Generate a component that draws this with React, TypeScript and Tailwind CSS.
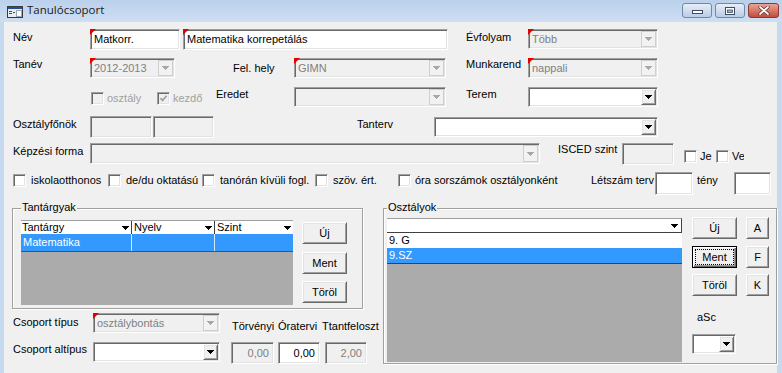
import React from "react";

const SUNKEN =
  "border border-t-[#a0a0a0] border-l-[#a0a0a0] border-r-white border-b-white shadow-[inset_1px_1px_0_#696969,inset_-1px_-1px_0_#e3e3e3]";
const RAISED =
  "border border-t-white border-l-white border-r-[#696969] border-b-[#696969] shadow-[inset_1px_1px_0_#e3e3e3,inset_-1px_-1px_0_#a0a0a0] bg-[#f0f0f0]";
const ETCHED = "border border-[#a0a0a0] shadow-[inset_1px_1px_0_#fff,1px_1px_0_#fff]";

function Arrow({ color = "#000" }: { color?: string }) {
  return (
    <svg width="7" height="4" viewBox="0 0 7 4" shapeRendering="crispEdges" fill={color}>
      <rect x="0" y="0" width="7" height="1" />
      <rect x="1" y="1" width="5" height="1" />
      <rect x="2" y="2" width="3" height="1" />
      <rect x="3" y="3" width="1" height="1" />
    </svg>
  );
}

function Req() {
  return (
    <span className="absolute -left-px -top-px w-0 h-0 border-t-[6px] border-r-[6px] border-t-[#e00000] border-r-transparent" />
  );
}

function Input({
  className = "",
  text = "",
  disabled = false,
  req = false,
  right = false,
}: {
  className?: string;
  text?: string;
  disabled?: boolean;
  req?: boolean;
  right?: boolean;
}) {
  return (
    <div
      className={`relative shrink-0 flex items-center ${SUNKEN} ${
        disabled ? "bg-[#f0f0f0] text-[#808080]" : "bg-white text-black"
      } ${right ? "justify-end pr-[4px]" : "pl-[3px]"} ${className}`}
    >
      <span className="whitespace-nowrap">{text}</span>
      {req && <Req />}
    </div>
  );
}

function Combo({
  className = "",
  text = "",
  disabled = false,
  req = false,
}: {
  className?: string;
  text?: string;
  disabled?: boolean;
  req?: boolean;
}) {
  return (
    <div
      className={`relative shrink-0 flex p-[1px] ${SUNKEN} ${
        disabled ? "bg-[#f0f0f0] text-[#808080]" : "bg-white text-black"
      } ${className}`}
    >
      <span className="flex-1 flex items-center pl-[2px] whitespace-nowrap overflow-hidden">{text}</span>
      <span
        className={`w-[15px] shrink-0 flex items-center justify-center ${
          disabled ? "border border-[#cfcfcf] bg-[#f2f2f2]" : RAISED
        }`}
      >
        <Arrow color={disabled ? "#a8a8a8" : "#000"} />
      </span>
      {req && <Req />}
    </div>
  );
}

function Check({
  label,
  checked = false,
  disabled = false,
  className = "",
  gap = "ml-[5px]",
}: {
  label: string;
  checked?: boolean;
  disabled?: boolean;
  className?: string;
  gap?: string;
}) {
  return (
    <div className={`flex items-center shrink-0 h-[13px] ${className}`}>
      <span
        className={`w-[13px] h-[13px] shrink-0 flex items-center justify-center ${SUNKEN} ${
          disabled ? "bg-[#f0f0f0]" : "bg-white"
        }`}
      >
        {checked && (
          <svg width="9" height="9" viewBox="0 0 9 9">
            <path d="M1.5 4.2 L3.6 6.4 L7.6 1.8" fill="none" stroke={disabled ? "#a0a0a0" : "#000"} strokeWidth="1.7" />
          </svg>
        )}
      </span>
      <span className={`${gap} whitespace-nowrap ${disabled ? "text-[#a0a0a0]" : ""}`}>{label}</span>
    </div>
  );
}

function Btn({ children, className = "" }: { children: React.ReactNode; className?: string }) {
  return <div className={`shrink-0 flex items-center justify-center ${RAISED} ${className}`}>{children}</div>;
}

function AppIcon() {
  return (
    <svg width="16" height="12" viewBox="0 0 16 12" shapeRendering="crispEdges">
      <rect x="0.5" y="0.5" width="15" height="11" fill="#e9edf2" stroke="#3a3a3a" />
      <rect x="1" y="1" width="14" height="2" fill="#1f4f9e" />
      <rect x="2" y="5" width="3" height="1" fill="#4a4a4a" />
      <rect x="2" y="7" width="3" height="1" fill="#4a4a4a" />
      <rect x="6" y="6" width="2" height="1" fill="#4a4a4a" />
      <rect x="9" y="4" width="5" height="6" fill="#ffffff" stroke="#9aa6b5" />
    </svg>
  );
}

function TitleBar() {
  return (
    <div className="h-[22px] flex bg-gradient-to-b from-[#bad0eb] to-[#cfdff2]">
      <div className="ml-[7px] mt-[6px]">
        <AppIcon />
      </div>
      <div className="ml-[4px] mt-[2px] font-['Open_Sans',sans-serif] text-[11.5px] leading-[16px] text-[#1a1a1a]">
        Tanulócsoport
      </div>
      <div className="ml-auto mr-[3px] mt-[3px] flex gap-[3px]">
        <div className="w-[30px] h-[15px] rounded-[3px] border border-[#6f87ab] bg-gradient-to-b from-[#e6eef8] to-[#b9cde7] flex items-end justify-center">
          <svg width="11" height="5" viewBox="0 0 11 5" className="mb-[2px]">
            <rect x="0.5" y="0.5" width="10" height="3" fill="#fff" stroke="#3f4c60" />
          </svg>
        </div>
        <div className="w-[30px] h-[15px] rounded-[3px] border border-[#6f87ab] bg-gradient-to-b from-[#e6eef8] to-[#b9cde7] flex items-center justify-center">
          <svg width="10" height="8" viewBox="0 0 10 8">
            <rect x="0.5" y="0.5" width="9" height="7" fill="#fff" stroke="#3f4c60" />
            <rect x="2.5" y="3" width="5" height="2.5" fill="#9db3d3" stroke="#3f4c60" strokeWidth="0.8" />
          </svg>
        </div>
        <div className="w-[31px] h-[15px] rounded-[3px] border border-[#8a3a32] bg-gradient-to-b from-[#e8a596] to-[#c2493b] flex items-center justify-center">
          <svg width="12" height="9" viewBox="0 0 12 9">
            <path d="M2 1 L10 8 M10 1 L2 8" stroke="#5a2a24" strokeWidth="3.2" strokeLinecap="round" />
            <path d="M2 1 L10 8 M10 1 L2 8" stroke="#ffffff" strokeWidth="1.8" strokeLinecap="round" />
          </svg>
        </div>
      </div>
    </div>
  );
}

function FocusBtn({ children }: { children: React.ReactNode }) {
  return (
    <div className="w-[45px] h-[22px] shrink-0 border border-black bg-[#f0f0f0] shadow-[inset_1px_1px_0_#fff,inset_-1px_-1px_0_#696969,inset_-2px_-2px_0_#a0a0a0] flex p-[2px]">
      <span className="flex-1 border border-dotted border-black flex items-center justify-center">{children}</span>
    </div>
  );
}

export default function App() {
  return (
    <div className="w-[782px] h-[373px] overflow-hidden bg-[#c6d9ef] font-['Liberation_Sans',Arial,sans-serif] text-[11px] leading-[13px] text-black">
      <TitleBar />
      <div className="flex h-[351px]">
        <div className="w-[4px] shrink-0" />
        <div className="w-[773px] shrink-0 bg-[#f0f0f0] flex flex-col">
          {/* Row 1 */}
          <div className="flex items-start mt-[7px] h-[21px]">
            <div className="ml-[9px] w-[77px] pt-[2px] shrink-0">Név</div>
            <Input className="w-[90px] h-[21px]" text="Matkorr." req />
            <Input className="ml-[3px] w-[265px] h-[21px]" text="Matematika korrepetálás" req />
            <div className="ml-[18px] w-[62px] pt-[2px] shrink-0">Évfolyam</div>
            <Combo className="w-[130px] h-[20px]" text="Több" disabled req />
          </div>

          {/* Row 2 */}
          <div className="flex items-start mt-[8px] h-[20px]">
            <div className="ml-[9px] w-[77px] shrink-0">Tanév</div>
            <Combo className="w-[85px] h-[20px]" text="2012-2013" disabled req />
            <div className="ml-[58px] w-[61px] pt-[4px] shrink-0">Fel. hely</div>
            <Combo className="w-[152px] h-[20px]" text="GIMN" disabled req />
            <div className="ml-[20px] w-[62px] shrink-0">Munkarend</div>
            <Combo className="w-[130px] h-[20px]" text="nappali" disabled req />
          </div>

          {/* Row 3 */}
          <div className="flex items-start mt-[9px] h-[20px]">
            <Check className="ml-[87px] w-[66px] mt-[5px]" label="osztály" disabled gap="ml-[3px]" />
            <Check className="w-[59px] mt-[5px]" label="kezdő" checked disabled gap="ml-[3px]" />
            <div className="w-[78px] pt-[1px] shrink-0">Eredet</div>
            <Combo className="w-[152px] h-[20px]" disabled />
            <div className="ml-[20px] w-[62px] pt-[1px] shrink-0">Terem</div>
            <Combo className="w-[130px] h-[20px]" />
          </div>

          {/* Row 4 */}
          <div className="flex items-start mt-[9px] h-[22px]">
            <div className="ml-[9px] w-[77px] pt-[2px] shrink-0">Osztályfőnök</div>
            <Input className="w-[62px] h-[22px]" disabled />
            <Input className="ml-[1px] w-[61px] h-[22px]" disabled />
            <div className="ml-[143px] w-[77px] pt-[2px] shrink-0">Tanterv</div>
            <Combo className="mt-[1px] w-[224px] h-[20px]" />
          </div>

          {/* Row 5 */}
          <div className="flex items-start mt-[5px] h-[22px]">
            <div className="ml-[9px] w-[77px] pt-[2px] shrink-0">Képzési forma</div>
            <Combo className="w-[450px] h-[21px]" disabled />
            <div className="ml-[18px] w-[64px] shrink-0 whitespace-nowrap overflow-hidden">ISCED szint</div>
            <Input className="w-[52px] h-[22px]" disabled />
            <Check className="ml-[10px] w-[32px] mt-[7px]" label="Je" gap="ml-[3px]" />
            <Check className="w-[28px] mt-[7px] overflow-hidden" label="Ve" gap="ml-[3px]" />
          </div>

          {/* Row 6 */}
          <div className="flex items-start mt-[7px] h-[23px]">
            <Check className="ml-[9px] w-[95px] mt-[2px]" label="iskolaotthonos" />
            <Check className="w-[94px] mt-[2px]" label="de/du oktatású" />
            <Check className="w-[113px] mt-[2px]" label="tanórán kívüli fogl." />
            <Check className="w-[83px] mt-[2px]" label="szöv. ért." />
            <Check className="w-[193px] mt-[2px]" label="óra sorszámok osztályonként" gap="ml-[4px]" />
            <div className="w-[64px] pt-[2px] shrink-0 whitespace-nowrap">Létszám terv</div>
            <Input className="w-[38px] h-[23px]" />
            <div className="ml-[4px] w-[37px] pt-[2px] shrink-0">tény</div>
            <Input className="w-[37px] h-[23px]" />
          </div>

          {/* Row 7: groups */}
          <div className="flex items-start mt-[13px]">
            <div className="ml-[8px] w-[371px] shrink-0 flex flex-col">
              <div className={`relative w-[351px] h-[101px] ${ETCHED} flex items-start`}>
                <span className="absolute -top-[8px] left-[8px] px-[1px] bg-[#f0f0f0]">Tantárgyak</span>
                <div className="ml-[8px] mt-[11px] w-[272px] h-[85px] bg-[#ababab] flex flex-col">
                  <div className="h-[14px] flex bg-white border-t border-[#a0a0a0]">
                    <div className="w-[111px] flex items-center justify-between pl-[1px] pr-[2px] border-r border-[#404040]">
                      <span>Tantárgy</span>
                      <Arrow />
                    </div>
                    <div className="w-[83px] flex items-center justify-between pl-[2px] pr-[2px] border-r border-[#404040]">
                      <span>Nyelv</span>
                      <Arrow />
                    </div>
                    <div className="flex-1 flex items-center justify-between pl-[2px] pr-[2px]">
                      <span>Szint</span>
                      <Arrow />
                    </div>
                  </div>
                  <div className="h-[18px] flex bg-[#3399ff] text-white border-b border-[#505050]">
                    <div className="w-[111px] flex items-center pl-[2px] border-r border-[#d8e8f8]">Matematika</div>
                    <div className="w-[83px] border-r border-[#d8e8f8]" />
                    <div className="flex-1" />
                  </div>
                </div>
                <div className="ml-[9px] mt-[13px] flex flex-col">
                  <Btn className="w-[45px] h-[22px]">Új</Btn>
                  <Btn className="mt-[8px] w-[45px] h-[22px]">Ment</Btn>
                  <Btn className="mt-[7px] w-[45px] h-[22px]">Töröl</Btn>
                </div>
              </div>

              <div className="flex items-start mt-[4px] h-[20px]">
                <div className="ml-[1px] w-[80px] pt-[3px] shrink-0">Csoport típus</div>
                <Combo className="w-[127px] h-[20px]" text="osztálybontás" disabled req />
                <div className="ml-[12px] w-[46px] pt-[7px] shrink-0">Törvényi</div>
                <div className="w-[44px] pt-[7px] shrink-0">Óratervi</div>
                <div className="pt-[7px] shrink-0 whitespace-nowrap">Ttantfeloszt</div>
              </div>

              <div className="flex items-start mt-[9px] h-[22px]">
                <div className="ml-[1px] w-[80px] pt-[1px] shrink-0">Csoport altípus</div>
                <Combo className="w-[127px] h-[20px]" />
                <Input className="ml-[11px] w-[43px] h-[22px]" text="0,00" disabled right />
                <Input className="ml-[4px] w-[42px] h-[22px]" text="0,00" right />
                <Input className="ml-[5px] w-[42px] h-[22px]" text="2,00" disabled right />
              </div>
            </div>

            <div className={`relative w-[394px] h-[156px] shrink-0 ${ETCHED} flex items-start`}>
              <span className="absolute -top-[8px] left-[3px] px-[1px] bg-[#f0f0f0]">Osztályok</span>
              <div className="ml-[3px] mt-[9px] w-[295px] h-[144px] flex flex-col">
                <div className="h-[15px] bg-white border-t border-t-[#a0a0a0] border-b border-b-[#404040] border-r border-r-[#404040] flex items-center justify-end pr-[3px]">
                  <Arrow />
                </div>
                <div className="flex-1 bg-[#ababab] flex flex-col">
                  <div className="h-[15px] bg-white pl-[2px] flex items-center">9. G</div>
                  <div className="h-[16px] bg-[#3399ff] text-white pl-[2px] flex items-center border-b border-[#404040]">
                    9.SZ
                  </div>
                </div>
              </div>
              <div className="ml-[10px] mt-[8px] flex flex-col">
                <div className="flex gap-[9px]">
                  <Btn className="w-[45px] h-[22px]">Új</Btn>
                  <Btn className="w-[23px] h-[22px]">A</Btn>
                </div>
                <div className="flex gap-[9px] mt-[7px]">
                  <FocusBtn>Ment</FocusBtn>
                  <Btn className="w-[23px] h-[22px]">F</Btn>
                </div>
                <div className="flex gap-[9px] mt-[6px]">
                  <Btn className="w-[45px] h-[22px]">Töröl</Btn>
                  <Btn className="w-[23px] h-[22px]">K</Btn>
                </div>
                <div className="ml-[5px] mt-[15px]">aSc</div>
                <Combo className="mt-[10px] w-[44px] h-[20px]" />
              </div>
            </div>
          </div>
        </div>
        <div className="w-[5px] shrink-0" />
      </div>
    </div>
  );
}
